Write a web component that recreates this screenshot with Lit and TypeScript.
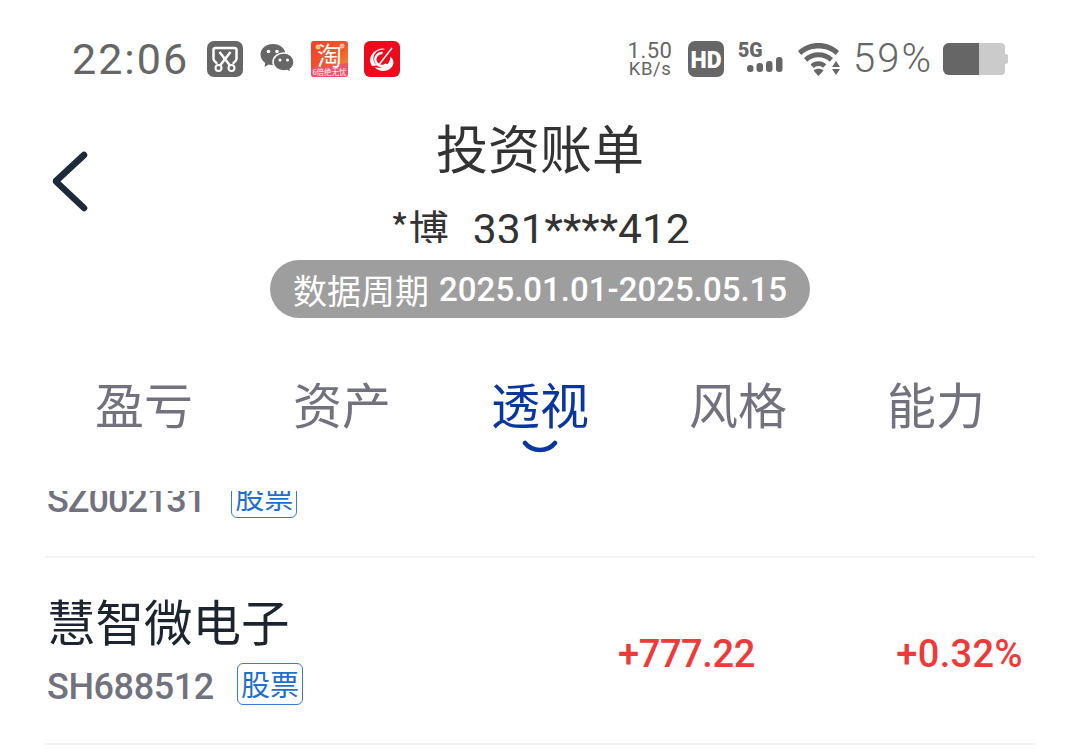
import { LitElement, html, css } from "lit";
import { customElement } from "lit/decorators.js";

@customElement("app-root")
export class AppRoot extends LitElement {
  static styles = css`
    :host { display: block; width: 1080px; height: 753px; overflow: hidden; background: #fff; font-family: Roboto, "Noto Sans CJK SC", sans-serif; }
    .status { height: 118px; box-sizing: border-box; padding: 0 72px; display: flex; align-items: center; color: #666; }
    .time { font-size: 43px; letter-spacing: 2px; width: 135px; line-height: 1; }
    .left, .right { display: flex; align-items: center; }
    .left svg, .right svg { display: block; flex: none; }
    .i2 { margin-left: 17px; }
    .i3 { margin-left: 17px; }
    .i4 { margin-left: 16px; }
    .spacer { flex: 1; }
    .speed { width: 46px; display: flex; flex-direction: column; align-items: center; }
    .speed b { font-weight: 400; font-size: 22px; letter-spacing: .5px; line-height: 21px; }
    .speed i { font-style: normal; font-size: 18.500px; letter-spacing: .6px; line-height: 17px; }
    .hd { margin-left: 15px; }
    .fg { margin-left: 14px; }
    .wf { margin-left: 14px; }
    .pct { font-size: 40px; font-weight: 300; letter-spacing: 2px; line-height: 1; margin-left: 11px; }
    .bat { margin-left: 10px; }

    .head { position: relative; height: 200px; display: flex; flex-direction: column; align-items: center; }
    .back { position: absolute; left: 51px; top: 33px; }
    h1 { margin: -3px 0 0; font-family: "Noto Sans CJK SC", sans-serif; font-weight: 400; font-size: 52px; line-height: 64px; color: #333; }
    .sub-clip { height: 64px; overflow: hidden; flex: none; }
    .sub { font-family: "Noto Sans CJK SC", Roboto, sans-serif; font-size: 40px; line-height: 97px; color: #333; white-space: pre; }
    .sub span { font-family: Roboto, sans-serif; font-size: 42.600px; margin-left: 6px; }
    .pill { margin-top: 17px; width: 540px; height: 58px; flex: none; border-radius: 29px; background: #9e9e9e; color: #fff; display: flex; align-items: center; justify-content: center; font-size: 33px; font-weight: 500; letter-spacing: 0; white-space: pre; }
    .pill span { font-family: "Noto Sans CJK SC", sans-serif; font-size: 34px; font-weight: 400; margin-right: 2px; }

    .tabs { margin-top: 55px; padding: 0 45px; display: grid; grid-template-columns: repeat(5, 1fr); height: 84px; }
    .tab { position: relative; text-align: center; font-family: "Noto Sans CJK SC", sans-serif; font-size: 49px; line-height: 60px; color: #72727e; }
    .tab.on { color: #0a36a0; }
    .tab svg { position: absolute; left: 50%; margin-left: -18px; top: 67px; }

    .list { margin-top: 34px; height: 263px; padding: 0 45px; overflow: hidden; }
    .first { height: 67px; border-bottom: 2px solid #f3f3f5; box-sizing: border-box; overflow: hidden; display: flex; flex-direction: column; justify-content: flex-end; padding: 0 0 35px 2px; }
    .row { height: 187px; box-sizing: border-box; border-bottom: 2px solid #f3f3f5; display: flex; align-items: flex-start; }
    .info { padding: 31px 0 0 2px; flex: none; width: 560px; box-sizing: border-box; }
    .name { font-family: "Noto Sans CJK SC", sans-serif; font-size: 48.500px; line-height: 62px; color: #1c2430; }
    .meta { display: flex; align-items: flex-start; gap: 23px; margin-top: 12px; flex: none; }
    .code { font-size: 36px; font-weight: 500; letter-spacing: -.4px; color: #72727e; line-height: 42px; margin-top: 3px; }
    .first .code { letter-spacing: -1px; }
    .first .meta { gap: 26px; }
    .tag { width: 66px; height: 42px; box-sizing: border-box; border: 1.500px solid #3a7bd0; border-radius: 6px; color: #1f6fd0; font-family: "Noto Sans CJK SC", sans-serif; font-size: 29px; line-height: 38px; text-align: center; }
    .num { color: #f03a3a; font-size: 38px; font-weight: 500; line-height: 44px; margin-top: 74px; white-space: nowrap; }
    .v1 { width: 136px; margin-left: 13px; letter-spacing: -.4px; }
    .v2 { flex: 1; text-align: right; padding-right: 12px; letter-spacing: .4px; }
  `;

  render() {
    return html`
      <div class="status">
        <span class="time">22:06</span>
        <div class="left">
          <svg width="36" height="36" viewBox="0 0 36 36">
            <rect width="36" height="36" rx="7" fill="#666" />
            <path d="M9.500 22C7.500 20.500 6.500 19.500 6.500 18V9a2 2 0 0 1 2-2h19a2 2 0 0 1 2 2v9c0 1.500-1 2.500-3 4" fill="none" stroke="#fff" stroke-width="2.500" stroke-linecap="round" />
            <path d="M12.500 11l10.500 13.500M23.500 11L13 24.500" stroke="#fff" stroke-width="2.500" />
            <circle cx="11.500" cy="27" r="3" fill="none" stroke="#fff" stroke-width="2" />
            <circle cx="24.500" cy="27" r="3" fill="none" stroke="#fff" stroke-width="2" />
          </svg>
          <svg class="i2" width="34" height="30" viewBox="0 0 34 30">
            <path d="M13 0C6 0 .500 4.500.500 10.500c0 3.500 2 6.500 4.800 8.500L4.500 23l4.200-2.400c1.400.5 2.800.7 4.300.7 6.900 0 12.500-4.800 12.500-10.800S19.900 0 13 0z" fill="#666" />
            <path d="M23.800 9C17.800 9 13 13 13 18s4.800 9 10.800 9c1.200 0 2.300-.2 3.400-.5l3.800 2.500-.8-3.600c2.300-1.700 3.800-4.500 3.800-7.400 0-5-4.200-9-10.200-9z" fill="#666" stroke="#fff" stroke-width="1.500" />
            <circle cx="8.500" cy="7.500" r="1.800" fill="#fff" /><circle cx="17" cy="7.500" r="1.800" fill="#fff" />
            <circle cx="20" cy="16" r="1.500" fill="#fff" /><circle cx="27.500" cy="16" r="1.500" fill="#fff" />
          </svg>
          <svg class="i3" width="37" height="36" viewBox="0 0 37 36">
            <defs>
              <linearGradient id="tb" x1="0" y1="0" x2="1" y2="1">
                <stop offset="0" stop-color="#f2402a" /><stop offset=".55" stop-color="#f0582c" /><stop offset="1" stop-color="#f8a63c" />
              </linearGradient>
            </defs>
            <rect width="37" height="36" rx="3" fill="url(#tb)" />
            <path d="M0 27L37 22v11a3 3 0 0 1-3 3H3a3 3 0 0 1-3-3z" fill="#f0506a" />
            <circle cx="7" cy="6" r="2.500" fill="#ffc46a" /><circle cx="31" cy="5" r="2.500" fill="#ffb8a0" />
            <text x="18.500" y="24" text-anchor="middle" font-size="25" fill="#fff" font-family="Noto Sans CJK SC">淘</text>
            <text x="18.500" y="34" text-anchor="middle" font-size="7.500" fill="#fff" font-family="Noto Sans CJK SC">6倍绝无忧</text>
          </svg>
          <svg class="i4" width="36" height="36" viewBox="0 0 36 36">
            <rect width="36" height="36" rx="6" fill="#ee0a1c" />
            <path d="M8 25C3 17 9 9 18 7.500c1.500 0 2.500.3 3 1-6-.5-10.500 2.500-11.500 7.500C9 19 10 22.500 13 24.500z" fill="#fff" />
            <path d="M10.500 26c5 2 10.500 0 13.500-3.500 2-2.400 2.500-5 2-7 4.500 3 4.500 8 1 11.500-4.500 4.500-12.500 3.500-16.500-1z" fill="#fff" />
            <path d="M18.500 12a6.500 6.500 0 1 0 4 11" fill="none" stroke="#fff" stroke-width="2.400" />
            <path d="M14 25L28 7" stroke="#fff" stroke-width="1.500" />
          </svg>
        </div>
        <span class="spacer"></span>
        <div class="right">
          <div class="speed"><b>1.50</b><i>KB/s</i></div>
          <svg class="hd" width="36" height="36" viewBox="0 0 36 36">
            <rect width="36" height="36" rx="7" fill="#666" />
            <text x="18" y="26.500" text-anchor="middle" font-size="23" font-weight="900" fill="#fff" font-family="Roboto">HD</text>
          </svg>
          <svg class="fg" width="46" height="36" viewBox="0 0 46 36">
            <text x="0" y="16" font-size="19.500" font-weight="900" fill="#666" font-family="Roboto">5G</text>
            <rect x="9" y="24" width="6.500" height="7" rx="3" fill="#666" />
            <rect x="18.500" y="22" width="6.500" height="9" rx="3" fill="#666" />
            <rect x="28" y="20" width="6.500" height="11" rx="3" fill="#666" />
            <rect x="38" y="16" width="6.500" height="15" rx="3" fill="#666" />
          </svg>
          <svg class="wf" width="44" height="36" viewBox="0 0 44 36">
            <path d="M0 10C6 4.500 13 2 20.500 2S35 4.500 41 10l-3.200 4C33 9.500 27 7.500 20.500 7.500S8 9.500 3.200 14z" fill="#666" />
            <path d="M6 17c4-3.800 9-5.800 14.500-5.800 5.500 0 10.500 2 14.500 5.800l-3.200 3.700c-3-3-6.800-4.500-11.300-4.500S12.200 17.700 9.200 20.700z" fill="#666" />
            <path d="M12.500 23.500c2.200-2.200 5-3.300 8-3.300s5.500 1 7.800 3l-3.200 3.500c-1.300-1.200-2.800-1.800-4.600-1.800s-3.500.7-4.800 2z" fill="#666" />
            <path d="M15.500 29.500c1.400-1.200 3.100-1.800 5-1.800s3.600.6 5 1.800l-5 5.500z" fill="#666" />
            <path d="M38 20l4 6h-8zM38 34l-4-6h8z" fill="#666" />
          </svg>
          <span class="pct">59%</span>
          <svg class="bat" width="65" height="34" viewBox="0 0 65 34">
            <path d="M6 1h52a4 4 0 0 1 4 4v7h1a2 2 0 0 1 2 2v6a2 2 0 0 1-2 2h-1v7a4 4 0 0 1-4 4H6a6 6 0 0 1-6-6V7a6 6 0 0 1 6-6z" fill="#cbcbcb" />
            <path d="M6 1h30v32H6a6 6 0 0 1-6-6V7a6 6 0 0 1 6-6z" fill="#666" />
          </svg>
        </div>
      </div>

      <div class="head">
        <svg class="back" width="40" height="62" viewBox="0 0 40 62">
          <path d="M33 4L5 30l0 .5L33 57" fill="none" stroke="#1c2a3a" stroke-width="6.500" stroke-linecap="round" stroke-linejoin="round" />
        </svg>
        <h1>投资账单</h1>
        <div class="sub-clip"><div class="sub">*博  <span>331****412</span></div></div>
        <div class="pill"><span>数据周期</span> 2025.01.01-2025.05.15</div>
      </div>

      <div class="tabs">
        <div class="tab">盈亏</div>
        <div class="tab">资产</div>
        <div class="tab on">透视
          <svg width="36" height="14" viewBox="0 0 36 14"><path d="M3 3c4 5 9 7 15 7s11-2 15-7" fill="none" stroke="#0a36a0" stroke-width="4.500" stroke-linecap="round" /></svg>
        </div>
        <div class="tab">风格</div>
        <div class="tab">能力</div>
      </div>

      <div class="list">
        <div class="first">
          <div class="meta"><span class="code">SZ002131</span><span class="tag">股票</span></div>
        </div>
        <div class="row">
          <div class="info">
            <div class="name">慧智微电子</div>
            <div class="meta"><span class="code">SH688512</span><span class="tag">股票</span></div>
          </div>
          <span class="num v1">+777.22</span>
          <span class="num v2">+0.32%</span>
        </div>
      </div>
    `;
  }
}
